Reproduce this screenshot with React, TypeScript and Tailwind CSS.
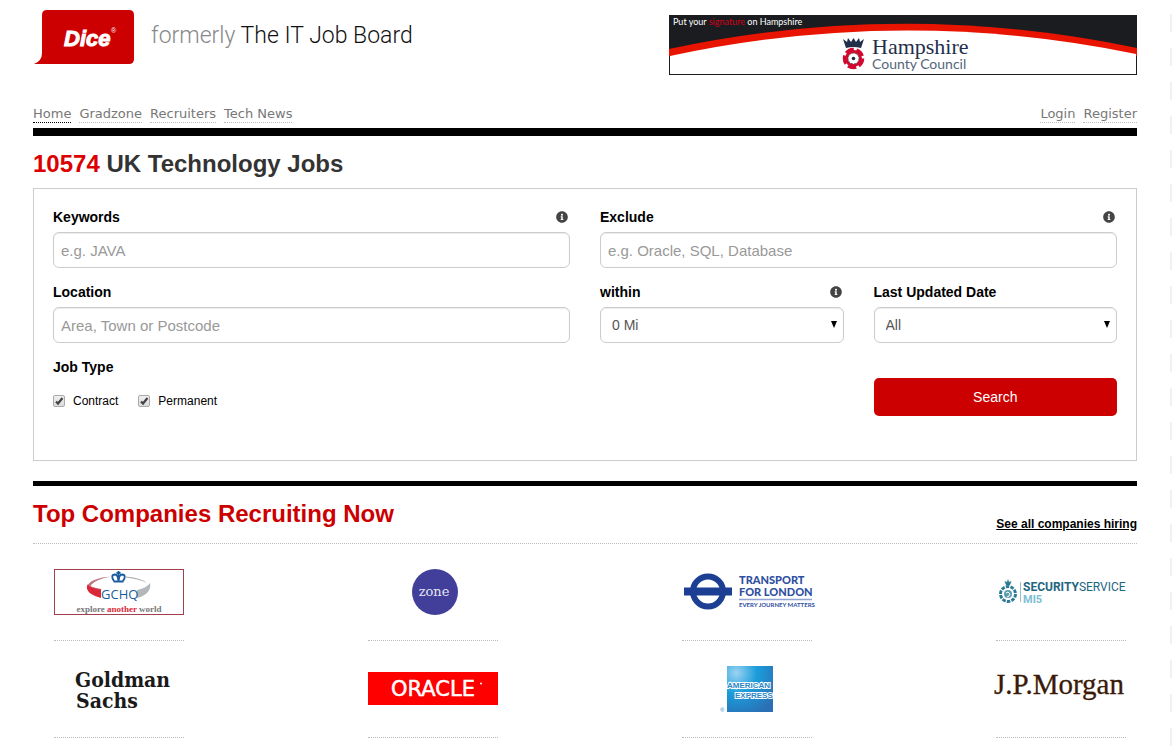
import { useState, type ReactNode } from 'react';
import { FaInfoCircle } from 'react-icons/fa';

// =============================================================================
// CONFIGURATION
// =============================================================================
const MAIN_LINKS = ['Home', 'Gradzone', 'Recruiters', 'Tech News'];
const ACCOUNT_LINKS = ['Login', 'Register'];
const JOB_TYPES = ['Contract', 'Permanent'];

const FIELD =
  'block h-9 w-full rounded-md border border-[#ccc] bg-white shadow-[inset_0_1px_1px_rgba(0,0,0,0.08)] outline-none focus:border-[#c00]';

// =============================================================================
// LOGOS
// =============================================================================
const DiceLogo = () => (
  <svg width="380" height="54" viewBox="0 0 380 54" className="overflow-visible" role="img" aria-label="Dice, formerly The IT Job Board">
    <path d="M14 0h82q5 0 5 5v44q0 5-5 5H1q8-3 8-11V5q0-5 5-5z" fill="#c00" />
    <text x="31" y="36" fontFamily="'Liberation Sans', sans-serif" fontSize="22" fontWeight="700" fontStyle="italic" fill="#fff" stroke="#fff" strokeWidth="1">
      Dice
    </text>
    <text x="78" y="23" fontFamily="'Liberation Sans', sans-serif" fontSize="7" fill="#fff">®</text>
    <text x="118" y="33" fontFamily="Roboto, sans-serif" fontSize="23" fontWeight="300" fill="#888">
      formerly <tspan fill="#111">The IT Job Board</tspan>
    </text>
  </svg>
);

const HampshireBanner = () => (
  <svg width="468" height="60" viewBox="0 0 468 60" role="img" aria-label="Hampshire County Council">
    <rect width="468" height="60" fill="#1b1c20" />
    <path d="M0 34Q234-16 468 33V41H0z" fill="#e81400" />
    <path d="M1 41Q234-9 467 39V59H1z" fill="#fff" />
    <text x="4" y="10" fontFamily="Lato, sans-serif" fontSize="9" fill="#fff">
      Put your <tspan fill="#d0021b">signature</tspan> on Hampshire
    </text>
    <path d="M174 24l4 3 1-4 3 4 2.500-4 2.500 4 3-4 1 4 4-3-3 9q-7.500-2-15 0z" fill="#1f2f4a" />
    <circle cx="184.500" cy="43.500" r="8.500" fill="none" stroke="#d3082e" strokeWidth="4.500" strokeDasharray="8 2.680" />
    <circle cx="184.500" cy="43.500" r="8.500" fill="#d3082e" />
    <circle cx="184.500" cy="43.500" r="5.500" fill="#fff" stroke="#555" strokeWidth="1" strokeDasharray="2 1" />
    <circle cx="184.500" cy="43.500" r="1.800" fill="#1f2f4a" />
    <text x="203" y="39" fontFamily="'Liberation Serif', serif" fontSize="22" fill="#1f2f4a">Hampshire</text>
    <text x="203" y="54" fontFamily="Lato, sans-serif" fontSize="14" fill="#56657a">County Council</text>
  </svg>
);

const GchqLogo = () => (
  <svg width="130" height="46" viewBox="0 0 130 46" role="img" aria-label="GCHQ">
    <rect x="0.500" y="0.500" width="129" height="45" fill="#fff" stroke="#a0404c" />
    <path d="M34 15q-2 2-1 5 2 6 14 9v-9q-11-1-13-5z" fill="#d9283a" />
    <path d="M34 16Q38 9 57 7.500 42 10 37 16q0 3 10 5z" fill="#b9777f" />
    <path d="M72 7.500Q88 9 93 14q-7-4-21-5.500z" fill="#a9a9ad" />
    <path d="M96 14q2 11-13 15v-8q10-2 13-7z" fill="#b4b7bb" />
    <g fill="none" stroke="#1a5c9e" strokeWidth="1.800">
      <path d="M60 12q-4-6 1-6.500 3 0 3.500 6.500 0.500-6.500 3.500-6.500 5 0.500 1 6.500" />
      <path d="M59.500 12.500h10M64.500 2v9M62.500 4h4" />
    </g>
    <text x="47" y="30" fontFamily="'Open Sans', sans-serif" fontSize="13" fill="#1a5c9e">GCHQ</text>
    <text x="65" y="43" textAnchor="middle" fontFamily="'Liberation Serif', serif" fontSize="9" fontWeight="700" fill="#77777b">
      explore <tspan fill="#d9283a">another</tspan> world
    </text>
  </svg>
);

const ZoneLogo = () => (
  <svg width="130" height="46" viewBox="0 0 130 46" role="img" aria-label="Zone">
    <circle cx="67" cy="23" r="23" fill="#413f99" />
    <text x="66" y="27" textAnchor="middle" fontFamily="'DejaVu Serif', serif" fontSize="13" fill="#e6e5f5">zone</text>
  </svg>
);

const TflLogo = () => (
  <svg width="130" height="46" viewBox="0 0 130 46" className="overflow-visible" role="img" aria-label="Transport for London">
    <circle cx="26" cy="22.500" r="15" fill="none" stroke="#1c3f94" strokeWidth="6" />
    <rect x="2" y="18.500" width="48" height="8" fill="#1c3f94" />
    <g fontFamily="Lato, sans-serif" fontWeight="900" fill="#2f4f9f">
      <text x="57" y="15" fontSize="11">TRANSPORT</text>
      <text x="57" y="27" fontSize="11">FOR LONDON</text>
      <text x="57" y="38" fontSize="6" fontWeight="700">EVERY JOURNEY MATTERS</text>
    </g>
    <path d="M57 30.500h73" stroke="#8fa3d3" strokeWidth="1.500" />
  </svg>
);

const Mi5Logo = () => (
  <svg width="130" height="46" viewBox="0 0 130 46" className="overflow-visible" role="img" aria-label="Security Service MI5">
    <circle cx="12" cy="25" r="7.500" fill="none" stroke="#2b7a94" strokeWidth="3" strokeDasharray="3.500 1.200" />
    <circle cx="12" cy="25" r="4" fill="#5b9db0" />
    <path d="M8.500 12l1.500 4h4l1.500-4-2.500 1-1-3-1 3z" fill="#2b7a94" />
    <path d="M10 24l2-1 2 2-1 2-2 1" fill="none" stroke="#fff" />
    <path d="M24.500 13v20" stroke="#8fc0cf" />
    <text x="27" y="22" fontFamily="Roboto, sans-serif" fontSize="12" fill="#1e6680">
      <tspan fontWeight="700">SECURITY</tspan>SERVICE
    </text>
    <text x="27" y="34" fontFamily="Roboto, sans-serif" fontSize="11" fontWeight="700" fill="#7dbdd4">MI5</text>
  </svg>
);

const GoldmanLogo = () => (
  <svg width="130" height="46" viewBox="0 0 130 46" role="img" aria-label="Goldman Sachs">
    <g fontFamily="'DejaVu Serif Condensed', 'DejaVu Serif', serif" fontSize="21" fontWeight="700" fill="#1a1a1a">
      <text x="21" y="21">Goldman</text>
      <text x="22" y="42">Sachs</text>
    </g>
  </svg>
);

const OracleLogo = () => (
  <svg width="130" height="46" viewBox="0 0 130 46" role="img" aria-label="Oracle">
    <rect y="6" width="130" height="33" fill="#f00" />
    <text x="65" y="30" textAnchor="middle" fontFamily="'DejaVu Sans', sans-serif" fontSize="21" fill="#fff" stroke="#fff" strokeWidth="0.500">
      ORACLE
    </text>
    <circle cx="113" cy="17.500" r="1" fill="#fff" />
  </svg>
);

const AmexLogo = () => (
  <svg width="130" height="46" viewBox="0 0 130 46" role="img" aria-label="American Express">
    <defs>
      <radialGradient id="amex" cx="0.2" cy="0.15" r="1">
        <stop offset="0" stopColor="#9bd3f2" />
        <stop offset="0.45" stopColor="#1b9ddb" />
        <stop offset="1" stopColor="#2a6fb5" />
      </radialGradient>
      <clipPath id="amex-box">
        <rect x="45" width="46" height="46" />
      </clipPath>
    </defs>
    <rect x="45" width="46" height="46" fill="url(#amex)" />
    <g clipPath="url(#amex-box)" fontFamily="'Liberation Sans', sans-serif" fontSize="8" fontWeight="700" fill="#2a86c8" stroke="#fff" strokeWidth="2" paintOrder="stroke">
      <text x="45" y="22">AMERICAN</text>
      <text x="53" y="32">EXPRESS</text>
    </g>
    <text x="38" y="46" fontFamily="'Liberation Sans', sans-serif" fontSize="6" fill="#2a86c8">®</text>
  </svg>
);

const JpMorganLogo = () => (
  <svg width="130" height="46" viewBox="0 0 130 46" className="overflow-visible" role="img" aria-label="J.P. Morgan">
    <text x="63" y="28" textAnchor="middle" fontFamily="'Liberation Serif', serif" fontSize="29" fill="#3b1a08" stroke="#3b1a08" strokeWidth="0.300">J.P.Morgan</text>
  </svg>
);

const COMPANIES = [
  [GchqLogo, ZoneLogo, TflLogo, Mi5Logo],
  [GoldmanLogo, OracleLogo, AmexLogo, JpMorganLogo],
];

// =============================================================================
// FORM PARTS
// =============================================================================
type FieldProps = { id: string; label: string; info?: boolean; children: ReactNode };

const Field = ({ id, label, info = false, children }: FieldProps) => (
  <div>
    <div className="mb-[5px] flex h-5 items-center justify-between">
      <label htmlFor={id} className="text-sm font-bold text-black">{label}</label>
      {info && (
        <button type="button" aria-label={`About ${label}`} className="mr-0.5 text-[#444]">
          <FaInfoCircle size={12} />
        </button>
      )}
    </div>
    {children}
  </div>
);

const TextField = ({ id, label, placeholder, info }: { id: string; label: string; placeholder: string; info?: boolean }) => (
  <Field id={id} label={label} info={info}>
    <input id={id} type="text" placeholder={placeholder} className={`${FIELD} px-[7px] text-[15px] text-[#555] placeholder:text-[#999]`} />
  </Field>
);

const SelectField = ({ id, label, options, info }: { id: string; label: string; options: string[]; info?: boolean }) => (
  <Field id={id} label={label} info={info}>
    <div className="relative">
      <select id={id} className={`${FIELD} appearance-none pr-6 pl-[11px] text-sm text-[#555]`}>
        {options.map((option) => (
          <option key={option}>{option}</option>
        ))}
      </select>
      <svg width="8" height="7" viewBox="0 0 8 7" className="pointer-events-none absolute top-3.5 right-1.5" aria-hidden="true">
        <path d="M1 0h6L4 7z" fill="#000" />
      </svg>
    </div>
  </Field>
);

const JobTypeOption = ({ label }: { label: string }) => {
  const [checked, setChecked] = useState(true);

  return (
    <label className="flex items-center gap-2 text-xs text-black">
      <span className="relative block h-3 w-3">
        <input
          type="checkbox"
          checked={checked}
          onChange={() => setChecked(!checked)}
          className="block h-3 w-3 appearance-none rounded-xs border border-[#aaa] bg-linear-to-b from-[#f0f0f0] to-[#dcdcdc]"
        />
        {checked && (
          <svg width="12" height="12" viewBox="0 0 12 12" className="pointer-events-none absolute inset-0" aria-hidden="true">
            <path d="M3 6.500l2 2L9.500 3" fill="none" stroke="#444" strokeWidth="2.200" />
          </svg>
        )}
      </span>
      {label}
    </label>
  );
};

const NavLinks = ({ links }: { links: string[] }) => (
  <ul className="flex gap-2">
    {links.map((link) => (
      <li key={link}>
        <a
          href="#"
          className={`block border-b border-dotted leading-[17px] text-[#777] ${link === 'Home' ? 'border-black' : 'border-[#bbb]'}`}
        >
          {link}
        </a>
      </li>
    ))}
  </ul>
);

// =============================================================================
// PAGE
// =============================================================================
export default function App() {
  return (
    <div className="min-h-screen bg-[repeating-linear-gradient(to_bottom,#fff_0,#fff_14px,#f0f0f0_14px,#f0f0f0_32px,#fff_32px,#fff_34px)] pr-0.5 font-['Liberation_Sans',Arial,sans-serif]">
      <div className="min-h-screen bg-white px-[33px]">
        <header>
          <div className="flex items-start justify-between pt-2.5">
            <a href="#"><DiceLogo /></a>
            <a href="#" className="mt-[5px]"><HampshireBanner /></a>
          </div>
          <nav className="mt-[30px] flex justify-between border-b-8 border-black pb-[5px] font-['DejaVu_Sans',Verdana,sans-serif] text-[13px]">
            <NavLinks links={MAIN_LINKS} />
            <NavLinks links={ACCOUNT_LINKS} />
          </nav>
        </header>

        <main>
          <h1 className="mt-3 mb-2 text-2xl font-bold text-[#333]">
            <span className="text-[#d00]">10574</span> UK Technology Jobs
          </h1>

          <form onSubmit={(e) => e.preventDefault()} className="grid grid-cols-4 gap-x-[30px] gap-y-3.5 border border-[#ccc] px-[19px] pt-[18px] pb-11">
            <div className="col-span-2">
              <TextField id="keywords" label="Keywords" placeholder="e.g. JAVA" info />
            </div>
            <div className="col-span-2">
              <TextField id="exclude" label="Exclude" placeholder="e.g. Oracle, SQL, Database" info />
            </div>
            <div className="col-span-2">
              <TextField id="location" label="Location" placeholder="Area, Town or Postcode" />
            </div>
            <SelectField id="within" label="within" options={['0 Mi', '5 Mi', '10 Mi', '20 Mi']} info />
            <SelectField id="updated" label="Last Updated Date" options={['All', 'Today', 'Last 7 days']} />
            <fieldset className="col-span-3">
              <legend className="text-sm font-bold text-black">Job Type</legend>
              <div className="mt-4 flex gap-5">
                {JOB_TYPES.map((type) => (
                  <JobTypeOption key={type} label={type} />
                ))}
              </div>
            </fieldset>
            <button type="submit" className="mt-[21px] h-[38px] rounded-[5px] bg-[#c00] text-sm text-white">
              Search
            </button>
          </form>

          <section className="mt-5 border-t-[5px] border-black">
            <div className="flex items-end justify-between border-b border-dotted border-[#bbb] pt-3 pb-[11px]">
              <h2 className="mb-0.5 text-2xl font-bold text-[#c00]">Top Companies Recruiting Now</h2>
              <a href="#" className="text-xs font-bold text-black underline">See all companies hiring</a>
            </div>
            {COMPANIES.map((row, i) => (
              <ul key={i} className="flex justify-between pr-[11px] pl-[21px]">
                {row.map((Logo, j) => (
                  <li key={j} className="border-b border-dotted border-[#bbb] py-[25px]">
                    <a href="#" className="block"><Logo /></a>
                  </li>
                ))}
              </ul>
            ))}
          </section>
        </main>
      </div>
    </div>
  );
}
